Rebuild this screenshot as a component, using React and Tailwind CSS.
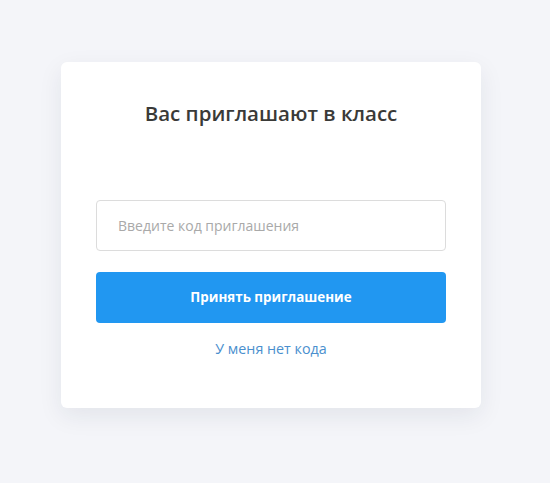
export default function App() {
  return (
    <div className="min-h-[483px] w-full bg-[#f4f5f9] pt-[62px] pl-[61px]" style={{ fontFamily: '"Open Sans", "Noto Sans", sans-serif' }}>
      <div className="w-[420px] h-[346px] bg-white rounded-[6px] shadow-[0_8px_24px_rgba(30,40,70,0.08)] px-[35px] pt-[37px] flex flex-col">
        <h1 className="text-center text-[20.5px] leading-[28px] font-semibold text-[#3a3a38]">Вас приглашают в класс</h1>
        <input
          className="mt-[73px] h-[51px] w-full rounded-[4px] border border-[#dcdcdc] px-[21px] text-[14px] text-[#333] outline-none placeholder:text-[#a9a9a9]"
          placeholder="Введите код приглашения"
        />
        <button className="mt-[21px] h-[51px] w-full rounded-[4px] bg-[#2197f1] text-white text-[13.4px] font-bold">
          Принять приглашение
        </button>
        <a className="mt-[16px] text-center text-[14.3px] leading-[20px] text-[#4a8fce]">У меня нет кода</a>
      </div>
    </div>
  );
}
